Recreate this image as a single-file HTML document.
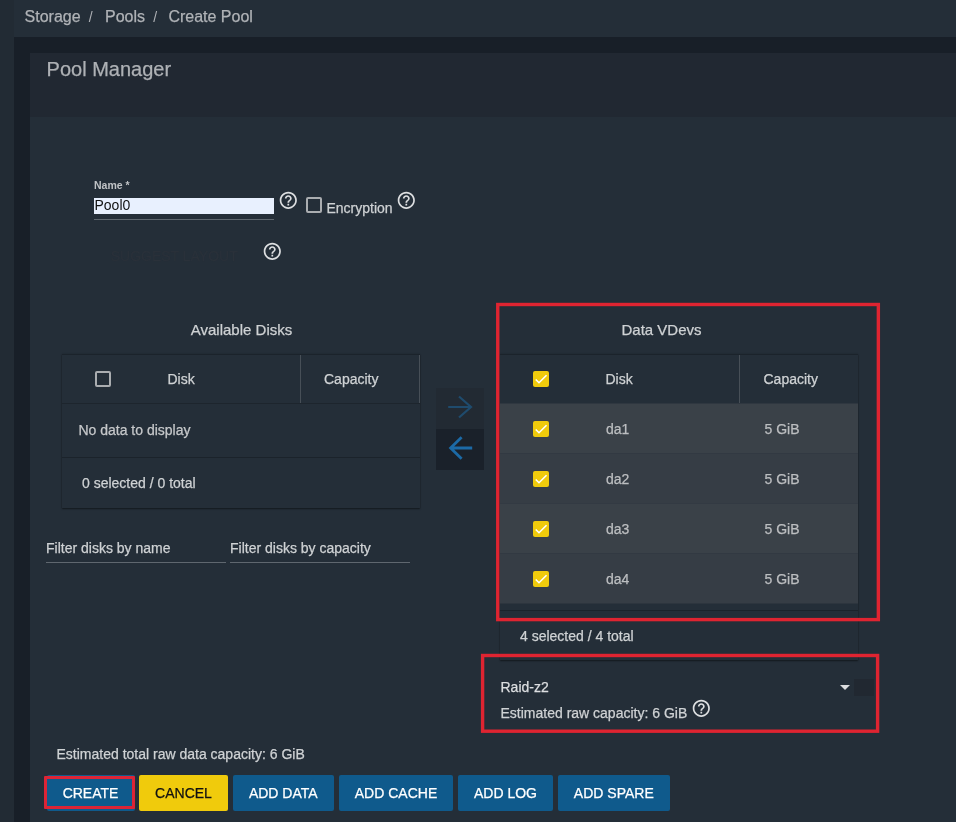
<!DOCTYPE html>
<html lang="en">
<head>
<meta charset="utf-8">
<title>Create Pool</title>
<style>
*{box-sizing:border-box;margin:0;padding:0}
html,body{width:956px;height:822px;overflow:hidden;background:#242e38}
body{position:relative;font-family:"Liberation Sans",Arial,sans-serif;font-size:14px;color:#cfd2d4;-webkit-font-smoothing:antialiased;-webkit-text-stroke:0.25px}
.abs{position:absolute}
.t{position:absolute;white-space:nowrap;line-height:16px;height:16px}
#strip{left:0;top:0;width:14px;height:822px;background:#222b34}
#topbar{left:14px;top:0;width:942px;height:37px;background:#242e38}
#band{left:14px;top:37px;width:942px;height:785px;background:#181f28}
#card{left:30px;top:53px;width:926px;height:769px;background:#242e38}
#cardhead{left:30px;top:53px;width:926px;height:64px;background:#212832}
.bc{font-size:16px;color:#b0b3b7;line-height:18px;height:18px}
.sep{font-size:14px;color:#aeb1b5;-webkit-text-stroke:0}
.help{position:absolute;width:20.6px;height:20.6px}
.cb{position:absolute;width:16px;height:16px;border:2px solid #aaadb0;border-radius:2px}
.cbc{position:absolute;width:16px;height:16px;border-radius:2px;background:#f0cb0c}
.cbc svg{position:absolute;left:0;top:0;width:16px;height:16px}
.line{position:absolute;height:1px}
.row{position:absolute;left:500px;width:358px;height:50px}
.btn{position:absolute;top:775px;height:36px;border-radius:2px;background:#0f5a8c;color:#fff;font-size:14px;line-height:36px;text-align:center;white-space:nowrap}
.red{position:absolute;border:3px solid #df2430}
</style>
</head>
<body>
<div id="strip" class="abs"></div>
<div id="topbar" class="abs"></div>
<div id="band" class="abs"></div>
<div id="card" class="abs"></div>
<div id="cardhead" class="abs"></div>

<div id="layer" style="position:absolute;left:0;top:0;width:956px;height:822px;will-change:transform">
<!-- breadcrumb -->
<div class="t bc" style="left:24.6px;top:8px">Storage</div>
<div class="t sep" style="left:88.8px;top:9.2px">/</div>
<div class="t bc" style="left:105px;top:8px">Pools</div>
<div class="t sep" style="left:153.2px;top:9.2px">/</div>
<div class="t bc" style="left:168.4px;top:8px">Create Pool</div>

<div class="t" style="left:46.6px;top:56.6px;font-size:20px;line-height:24px;height:24px;color:#aeb1b5">Pool Manager</div>

<!-- name field -->
<div class="t" style="left:94px;top:178px;font-size:10.5px;font-weight:bold;line-height:14px;height:14px;color:#c0c3c6;-webkit-text-stroke:0">Name *</div>
<div class="abs" style="left:94px;top:198px;width:180px;height:16px;background:#e8f0fe"></div>
<div class="t" style="left:94.5px;top:197px;color:#111;-webkit-text-stroke:0">Pool0</div>
<div class="line" style="left:94px;top:219px;width:180px;background:#5f676f"></div>

<svg class="help" style="left:278.1px;top:189.9px" viewBox="0 0 24 24"><path fill="#dddfe1" d="M11 18h2v-2h-2v2zm1-16C6.48 2 2 6.480 2 12s4.480 10 10 10 10-4.480 10-10S17.520 2 12 2zm0 18c-4.410 0-8-3.590-8-8s3.590-8 8-8 8 3.590 8 8-3.590 8-8 8zm0-14c-2.210 0-4 1.790-4 4h2c0-1.100.9-2 2-2s2 .9 2 2c0 2-3 1.750-3 5h2c0-2.250 3-2.500 3-5 0-2.210-1.790-4-4-4z"/></svg>
<div class="cb" style="left:306px;top:197px"></div>
<div class="t" style="left:326.5px;top:200px">Encryption</div>
<svg class="help" style="left:396px;top:189.9px" viewBox="0 0 24 24"><path fill="#dddfe1" d="M11 18h2v-2h-2v2zm1-16C6.48 2 2 6.480 2 12s4.480 10 10 10 10-4.480 10-10S17.520 2 12 2zm0 18c-4.410 0-8-3.590-8-8s3.590-8 8-8 8 3.590 8 8-3.590 8-8 8zm0-14c-2.210 0-4 1.790-4 4h2c0-1.100.9-2 2-2s2 .9 2 2c0 2-3 1.750-3 5h2c0-2.250 3-2.500 3-5 0-2.210-1.790-4-4-4z"/></svg>

<div class="t" style="left:110.7px;top:248px;color:#2a313a">SUGGEST LAYOUT</div>
<svg class="help" style="left:262.1px;top:241px" viewBox="0 0 24 24"><path fill="#dddfe1" d="M11 18h2v-2h-2v2zm1-16C6.48 2 2 6.480 2 12s4.480 10 10 10 10-4.480 10-10S17.520 2 12 2zm0 18c-4.410 0-8-3.590-8-8s3.590-8 8-8 8 3.590 8 8-3.590 8-8 8zm0-14c-2.210 0-4 1.790-4 4h2c0-1.100.9-2 2-2s2 .9 2 2c0 2-3 1.750-3 5h2c0-2.250 3-2.500 3-5 0-2.210-1.790-4-4-4z"/></svg>

<!-- available disks -->
<div class="t" style="left:141.5px;top:320.6px;width:200px;text-align:center;font-size:15px;line-height:17px;height:17px">Available Disks</div>
<div class="abs" style="left:62px;top:354px;width:358px;height:154px;background:#242e38;box-shadow:0 1px 1.5px rgba(0,0,0,.45),0 0 1.5px rgba(0,0,0,.22)"></div>
<div class="line" style="left:62px;top:354px;width:358px;background:#1b232b"></div>
<div class="line" style="left:62px;top:403px;width:358px;background:#1d252d"></div>
<div class="line" style="left:62px;top:457px;width:358px;background:#1b232b"></div>
<div class="abs" style="left:300px;top:355px;width:1px;height:48px;background:#474f57"></div>
<div class="abs" style="left:419px;top:355px;width:1px;height:48px;background:#474f57"></div>
<div class="cb" style="left:95px;top:371px"></div>
<div class="t" style="left:167.5px;top:371px">Disk</div>
<div class="t" style="left:324px;top:371px">Capacity</div>
<div class="t" style="left:78.4px;top:422px;color:#c6c8ca">No data to display</div>
<div class="t" style="left:82px;top:475px">0 selected / 0 total</div>

<!-- filters -->
<div class="t" style="left:46px;top:540px">Filter disks by name</div>
<div class="line" style="left:46px;top:562px;width:180px;background:#5f676f"></div>
<div class="t" style="left:230px;top:540px">Filter disks by capacity</div>
<div class="line" style="left:230px;top:562px;width:180px;background:#5f676f"></div>

<!-- arrow buttons -->
<div class="abs" style="left:436px;top:388px;width:48px;height:41px;background:#222a33"></div>
<div class="abs" style="left:436px;top:429px;width:48px;height:41px;background:#1a212a"></div>
<svg class="abs" style="left:436px;top:388px;width:48px;height:82px" viewBox="0 0 48 82">
 <path d="M12.2 19H34.5M23 8.5L35 19L23 29.5" fill="none" stroke="#1f4b6d" stroke-width="2.2"/>
 <path d="M36.2 60H15.5M25.6 49.3L14.6 60L25.6 70.7" fill="none" stroke="#1c6aa6" stroke-width="2.8"/>
</svg>

<!-- data vdevs -->
<div class="t" style="left:561.5px;top:321px;width:200px;text-align:center;font-size:15px;line-height:17px;height:17px">Data VDevs</div>
<div class="abs" style="left:500px;top:354px;width:358px;height:306px;background:#242e38;box-shadow:0 1px 1.5px rgba(0,0,0,.45),0 0 1.5px rgba(0,0,0,.22)"></div>
<div class="line" style="left:500px;top:354px;width:358px;background:#1b232b"></div>
<div class="abs" style="left:739px;top:355px;width:1px;height:48px;background:#474f57"></div>
<div class="cbc" style="left:533px;top:371px"><svg viewBox="0 0 24 24"><path d="M4.1 12.7L9 17.6 20.3 6.3" fill="none" stroke="#fff" stroke-width="2.4"/></svg></div>
<div class="t" style="left:605.5px;top:371px">Disk</div>
<div class="t" style="left:763.5px;top:371px">Capacity</div>

<svg class="abs" style="left:500px;top:400px;width:358px;height:210px" viewBox="0 0 358 210">
 <rect x="0" y="3.5" width="358" height="50" fill="#3a4148"/>
 <rect x="0" y="53.5" width="358" height="50" fill="#363d45"/>
 <rect x="0" y="103.5" width="358" height="50" fill="#3a4148"/>
 <rect x="0" y="153.5" width="358" height="50" fill="#363d45"/>
</svg>

<div class="cbc" style="left:533px;top:421px"><svg viewBox="0 0 24 24"><path d="M4.1 12.7L9 17.6 20.3 6.3" fill="none" stroke="#fff" stroke-width="2.4"/></svg></div>
<div class="t" style="left:606px;top:421px;color:#bcbec0">da1</div>
<div class="t" style="left:764.5px;top:421px;color:#bcbec0">5 GiB</div>
<div class="cbc" style="left:533px;top:471px"><svg viewBox="0 0 24 24"><path d="M4.1 12.7L9 17.6 20.3 6.3" fill="none" stroke="#fff" stroke-width="2.4"/></svg></div>
<div class="t" style="left:606px;top:471px;color:#bcbec0">da2</div>
<div class="t" style="left:764.5px;top:471px;color:#bcbec0">5 GiB</div>
<div class="cbc" style="left:533px;top:521px"><svg viewBox="0 0 24 24"><path d="M4.1 12.7L9 17.6 20.3 6.3" fill="none" stroke="#fff" stroke-width="2.4"/></svg></div>
<div class="t" style="left:606px;top:521px;color:#bcbec0">da3</div>
<div class="t" style="left:764.5px;top:521px;color:#bcbec0">5 GiB</div>
<div class="cbc" style="left:533px;top:571px"><svg viewBox="0 0 24 24"><path d="M4.1 12.7L9 17.6 20.3 6.3" fill="none" stroke="#fff" stroke-width="2.4"/></svg></div>
<div class="t" style="left:606px;top:571px;color:#bcbec0">da4</div>
<div class="t" style="left:764.5px;top:571px;color:#bcbec0">5 GiB</div>

<div class="line" style="left:500px;top:610px;width:358px;background:#1b232b"></div>
<div class="t" style="left:520px;top:628px">4 selected / 4 total</div>

<svg class="abs" style="left:0;top:0;width:956px;height:822px;pointer-events:none" viewBox="0 0 956 822">
 <rect x="497.75" y="304.5" width="380.6" height="315.1" fill="none" stroke="#df2431" stroke-width="3.4"/>
 <rect x="482.6" y="655.5" width="395" height="75.7" fill="none" stroke="#df2431" stroke-width="3.4"/>
</svg>

<!-- raid -->
<div class="t" style="left:500.5px;top:679px;color:#dcdee0">Raid-z2</div>
<svg class="abs" style="left:840px;top:685px;width:10px;height:5px" viewBox="0 0 10 5"><path d="M0 0H10L5 5Z" fill="#dcdddf"/></svg>
<div class="abs" style="left:854px;top:679px;width:20px;height:17px;background:#212831"></div>
<div class="t" style="left:500.5px;top:705px">Estimated raw capacity: 6 GiB</div>
<svg class="help" style="left:691.2px;top:698px" viewBox="0 0 24 24"><path fill="#dddfe1" d="M11 18h2v-2h-2v2zm1-16C6.48 2 2 6.480 2 12s4.480 10 10 10 10-4.480 10-10S17.520 2 12 2zm0 18c-4.410 0-8-3.590-8-8s3.590-8 8-8 8 3.590 8 8-3.590 8-8 8zm0-14c-2.210 0-4 1.790-4 4h2c0-1.100.9-2 2-2s2 .9 2 2c0 2-3 1.750-3 5h2c0-2.250 3-2.500 3-5 0-2.210-1.790-4-4-4z"/></svg>

<div class="t" style="left:56.5px;top:746px">Estimated total raw data capacity: 6 GiB</div>

<!-- buttons -->
<div class="btn" style="left:46.5px;width:88px">CREATE</div>
<div class="abs" style="left:44px;top:776px;width:91px;height:33px;border:3px solid #dc2436;border-radius:1px"></div>
<div class="btn" style="left:139px;width:89px;background:#f0cb0c;color:#111">CANCEL</div>
<div class="btn" style="left:233px;width:100.5px">ADD DATA</div>
<div class="btn" style="left:339px;width:114px">ADD CACHE</div>
<div class="btn" style="left:458px;width:95px">ADD LOG</div>
<div class="btn" style="left:558px;width:111.6px">ADD SPARE</div>
</div>
</body>
</html>
